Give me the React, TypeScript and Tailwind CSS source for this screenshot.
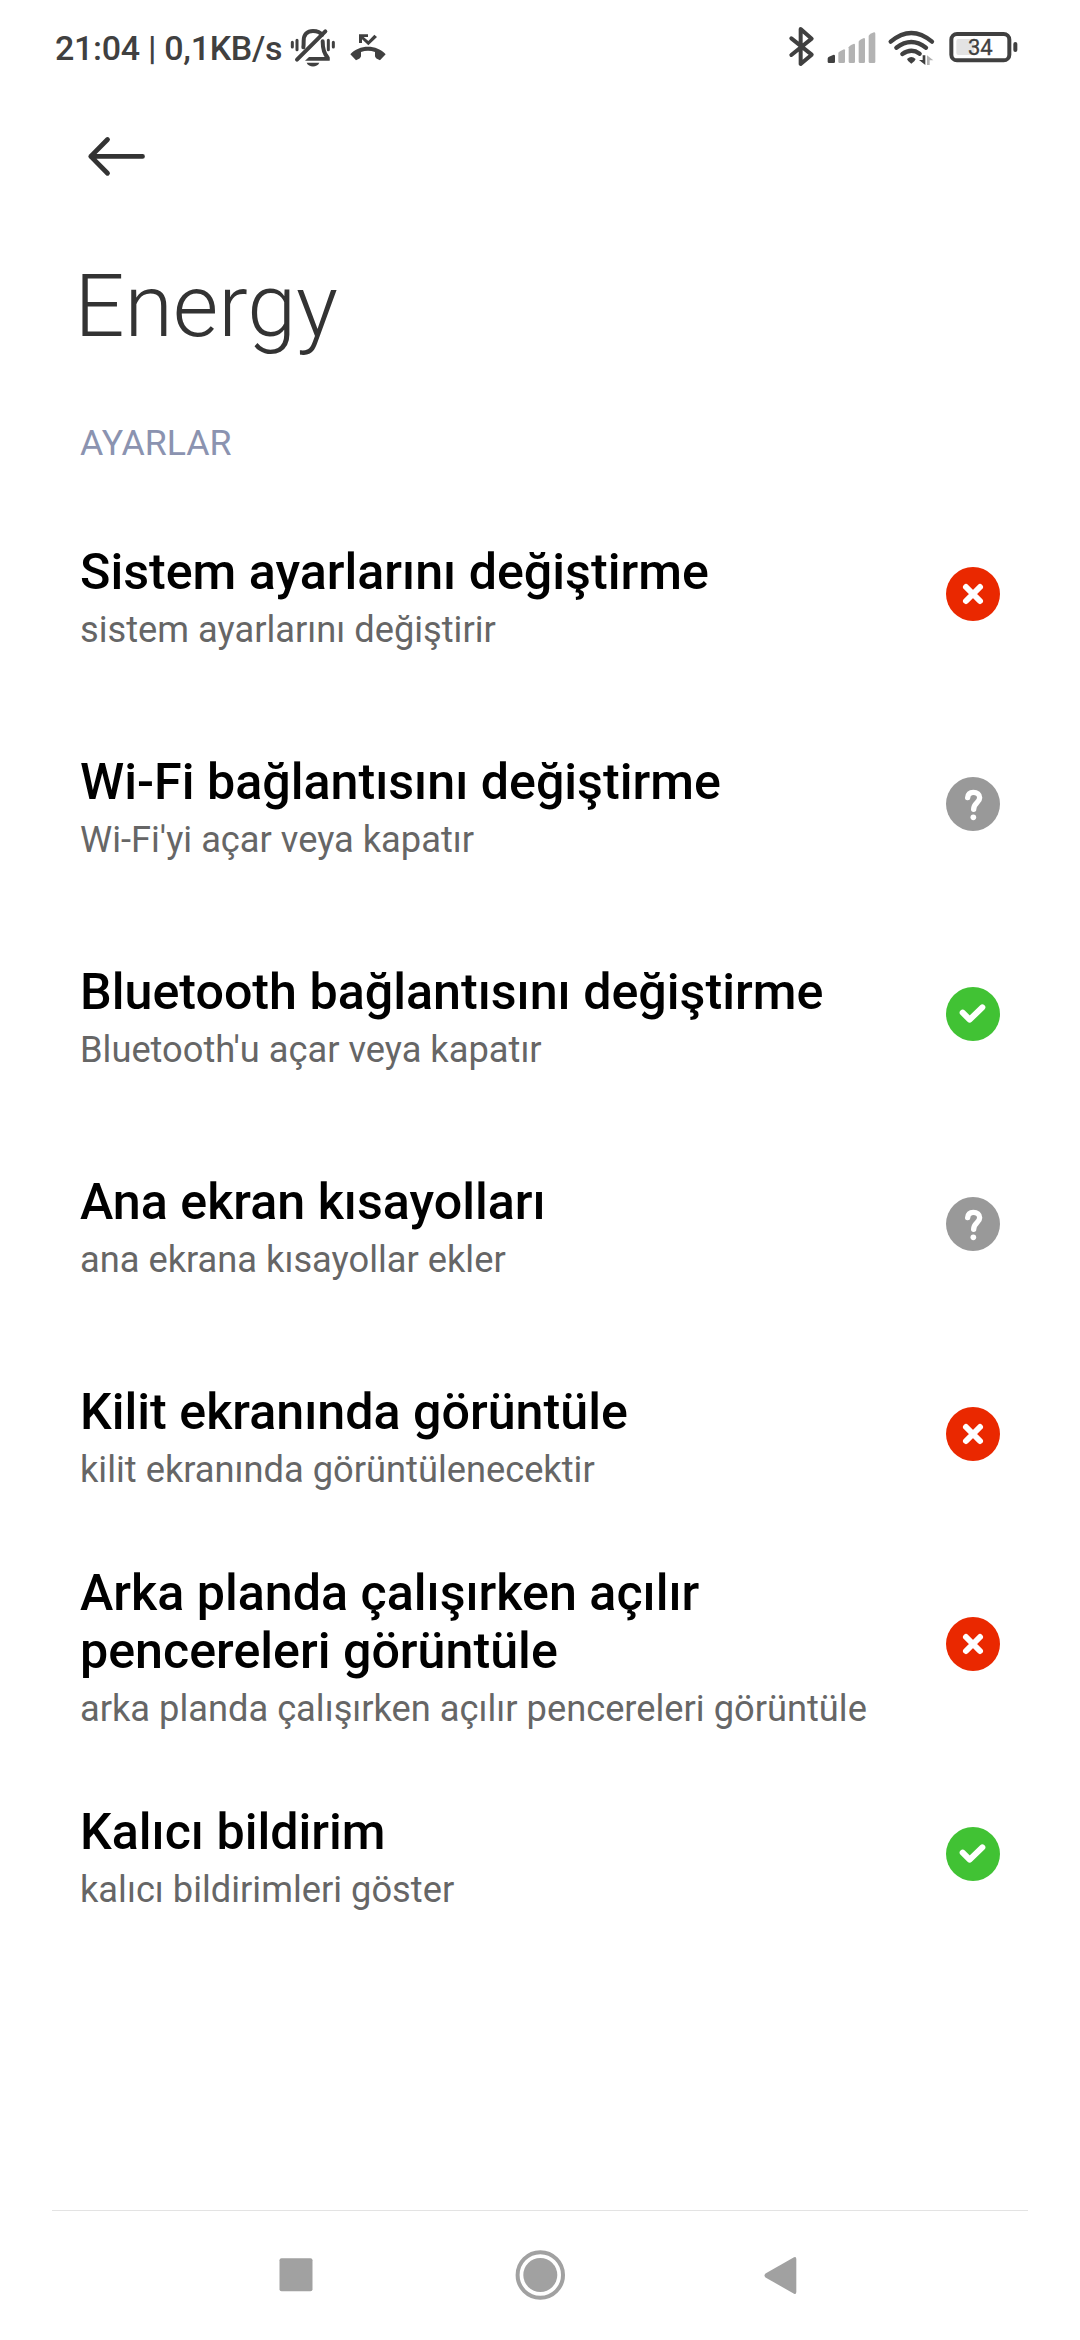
import React from 'react';

type Status = 'no' | 'ask' | 'yes';

const items: { title: string; detail: string; status: Status }[] = [
  { title: 'Sistem ayarlarını değiştirme', detail: 'sistem ayarlarını değiştirir', status: 'no' },
  { title: 'Wi-Fi bağlantısını değiştirme', detail: "Wi-Fi'yi açar veya kapatır", status: 'ask' },
  { title: 'Bluetooth bağlantısını değiştirme', detail: "Bluetooth'u açar veya kapatır", status: 'yes' },
  { title: 'Ana ekran kısayolları', detail: 'ana ekrana kısayollar ekler', status: 'ask' },
  { title: 'Kilit ekranında görüntüle', detail: 'kilit ekranında görüntülenecektir', status: 'no' },
  {
    title: 'Arka planda çalışırken açılır pencereleri görüntüle',
    detail: 'arka planda çalışırken açılır pencereleri görüntüle',
    status: 'no',
  },
  { title: 'Kalıcı bildirim', detail: 'kalıcı bildirimleri göster', status: 'yes' },
];

function StatusIcon({ status }: { status: Status }) {
  const fill = { no: '#ea2800', ask: '#999999', yes: '#41c234' }[status];
  return (
    <svg className="size-[54px] shrink-0" viewBox="0 0 162 162" fill="none" stroke="#fff" strokeLinecap="round" strokeLinejoin="round">
      <circle cx="81" cy="81" r="81" fill={fill} stroke="none" />
      {status === 'no' && <path d="M60 60L102 102M102 60L60 102" strokeWidth="18" />}
      {status === 'ask' && (
        <>
          <path d="M65 62C66 50 73 46 82 46C93 46 101 52 101 62C101 77 83 77 83 97" strokeWidth="16" />
          <circle cx="82" cy="121" r="8.5" fill="#fff" stroke="none" />
        </>
      )}
      {status === 'yes' && <path d="M50 77L71 98L109 61" strokeWidth="18" />}
    </svg>
  );
}

function StatusBar() {
  return (
    <header className="flex h-[96px] items-start justify-between pl-[55px] pr-[43px] text-[#404040]">
      <div className="flex">
        <div className="w-[235px] whitespace-nowrap pt-[27px] text-[34px] font-medium leading-[42px] tracking-[-0.29px]">21:04 | 0,1KB/s</div>
        <svg className="mt-[10px] h-[80px] w-[110px]" viewBox="750 0 330 240" fill="none" stroke="currentColor" strokeLinecap="round">
          <path d="M757 97V111M771 91V119M865 91V119M880 97V111" strokeWidth="9" />
          <path d="M790 112C791 106 791 101 791 93C791 73 802 63 819 63C832 63 841 67 846 75M848 94C848 118 851 130 863 143" strokeWidth="12" />
          <path d="M771 149L856 64" strokeWidth="12" />
          <path d="M807 141H863Q871 142 869 152H795Z" fill="currentColor" stroke="none" />
          <path d="M800 158H838C832 173 806 173 800 158Z" fill="currentColor" stroke="none" />
          <path d="M931 133C957 103 1011 103 1037 133L1020 151Q1006 146 1005 139V126Q984 119 963 126V139Q962 146 948 151Z" fill="currentColor" stroke="none" />
          <path d="M957 73H984V81H971L985 93L1003 74L1011 81L985 106L966 88V99H957Z" fill="currentColor" stroke="none" />
        </svg>
      </div>
      <svg className="mt-[10px] h-[80px] w-[252px]" viewBox="44 0 756 240" fill="none" stroke="currentColor">
        <path d="M63 85L124 134L91 162V57L124 86L63 135" strokeWidth="12" strokeLinecap="round" strokeLinejoin="round" />
        <path d="M172 146Q172 142 176 140L190 134Q194 134 194 138V155Q194 159 190 159H176Q172 159 172 155Z" fill="currentColor" stroke="none" />
        <g fill="#b3b3b3" stroke="none">
          <path d="M204 129Q204 126 221 118Q224 118 224 121V155Q224 159 220 159H208Q204 159 204 155Z" />
          <path d="M235 112Q235 108 251 101Q254 101 254 105V155Q254 159 250 159H239Q235 159 235 155Z" />
          <path d="M265 95Q265 91 281 84Q284 84 284 88V155Q284 159 280 159H269Q265 159 265 155Z" />
          <path d="M295 78Q295 74 311 67Q315 67 315 71V155Q315 159 311 159H299Q295 159 295 155Z" />
        </g>
        <g strokeWidth="13" strokeLinecap="round">
          <path d="M361 95Q423 43 485 95" />
          <path d="M378 113Q423 79 467 113" />
          <path d="M396 132Q423 113 448 131" />
        </g>
        <path d="M410 147Q423 135 436 147Q434 155 423 161Q412 155 410 147Z" fill="currentColor" stroke="none" />
        <path d="M457 136H465V165L446 150H457Z" fill="currentColor" stroke="none" />
        <path d="M470 165V136L489 151H478V165Z" fill="#b3b3b3" stroke="none" />
        <rect x="558" y="87" width="54" height="48" rx="6" fill="#e3e3e3" stroke="none" />
        <rect x="543" y="72" width="174" height="79" rx="17" strokeWidth="12" />
        <rect x="729" y="96" width="12" height="30" rx="6" fill="currentColor" stroke="none" />
        <text x="593" y="136" fontSize="66" fill="currentColor" stroke="currentColor" strokeWidth="1">34</text>
      </svg>
    </header>
  );
}

export default function App() {
  return (
    <div className="flex h-[2340px] w-[1080px] flex-col bg-white font-['Roboto',sans-serif]">
      <StatusBar />
      <button className="ml-[86px] mt-[30px] block h-[60px] w-[62px]" aria-label="Geri">
        <svg className="h-[60px] w-[62px]" viewBox="0 0 62 60" fill="none" stroke="#333" strokeWidth="4.8" strokeLinecap="round" strokeLinejoin="round">
          <path d="M56.5 30.4H4.8M21.5 13.5L4.8 30.4L21.5 47.3" />
        </svg>
      </button>
      <h1 className="mt-[68px] pl-[74.4px] text-[88px] font-light leading-[104px] text-[#333]">Energy</h1>
      <h2 className="mt-[64px] h-[67px] pl-[80px] text-[35.7px] leading-[42px] text-[#8b93b0]">AYARLAR</h2>
      <main className="grow">
        {items.map((item) => (
          <section key={item.title} className="flex h-[210px] items-center justify-between px-[80px]">
            <div className="w-[800px] pt-[5px]">
              <h3 className="text-[50.2px] font-medium leading-[58px] text-black">{item.title}</h3>
              <p className="pt-2 text-[36.25px] leading-[42px] text-[#666]">{item.detail}</p>
            </div>
            <StatusIcon status={item.status} />
          </section>
        ))}
      </main>
      <nav className="mx-[52px] flex h-[130px] justify-center border-t border-[#e3e3e3]">
        <svg className="h-[129px] w-[976px]" viewBox="52 2211 976 129" fill="#a1a1a1">
          <rect x="279.5" y="2258.3" width="33" height="33" rx="2" />
          <circle cx="540.3" cy="2275" r="22.7" fill="none" stroke="#a1a1a1" strokeWidth="4" />
          <circle cx="540.3" cy="2275" r="17" />
          <path d="M765.5 2273.5L794 2257.3Q796.3 2256.3 796.3 2259V2292Q796.3 2294.7 794 2293.7L765.5 2277.5Q763.5 2275.5 765.5 2273.5Z" />
        </svg>
      </nav>
    </div>
  );
}
